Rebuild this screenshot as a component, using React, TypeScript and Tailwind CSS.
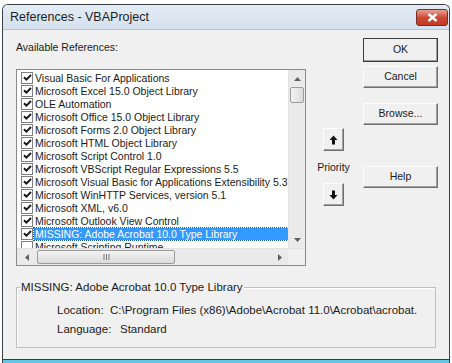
import React from 'react';

const refs = [
  { name: 'Visual Basic For Applications', checked: true },
  { name: 'Microsoft Excel 15.0 Object Library', checked: true },
  { name: 'OLE Automation', checked: true },
  { name: 'Microsoft Office 15.0 Object Library', checked: true },
  { name: 'Microsoft Forms 2.0 Object Library', checked: true },
  { name: 'Microsoft HTML Object Library', checked: true },
  { name: 'Microsoft Script Control 1.0', checked: true },
  { name: 'Microsoft VBScript Regular Expressions 5.5', checked: true },
  { name: 'Microsoft Visual Basic for Applications Extensibility 5.3', checked: true },
  { name: 'Microsoft WinHTTP Services, version 5.1', checked: true },
  { name: 'Microsoft XML, v6.0', checked: true },
  { name: 'Microsoft Outlook View Control', checked: true },
  { name: 'MISSING: Adobe Acrobat 10.0 Type Library', checked: true, selected: true },
  { name: 'Microsoft Scripting Runtime', checked: false },
];

function CheckBox({ checked }: { checked: boolean }) {
  return (
    <div className="w-[12px] h-[12px] shrink-0 border border-[#7e7f80] bg-white flex items-center justify-center">
      {checked && (
        <svg width="9" height="9" viewBox="0 0 9 9">
          <path d="M1 4.2 L3.4 6.6 L8 2" fill="none" stroke="#1a1a1a" strokeWidth="2" />
        </svg>
      )}
    </div>
  );
}

function Button({ label, isDefault = false, h = 'h-[22px]' }: { label: string; isDefault?: boolean; h?: string }) {
  return (
    <div
      className={`${h} w-[75px] flex items-center justify-center bg-[#f0f0f0] border ${
        isDefault ? 'border-[#3c3c3c]' : 'border-t-[#fdfdfd] border-l-[#fdfdfd] border-b-[#707070] border-r-[#707070]'
      } shadow-[inset_-1px_-1px_0_#a0a0a0]`}
    >
      <span className="text-[#1b1b1b]">{label}</span>
    </div>
  );
}

function ArrowBtn({ dir }: { dir: 'up' | 'down' }) {
  return (
    <div className="w-[21px] h-[23px] bg-[#f0f0f0] border border-t-[#fdfdfd] border-l-[#fdfdfd] border-b-[#707070] border-r-[#707070] shadow-[inset_-1px_-1px_0_#a0a0a0] flex items-center justify-center">
      <svg width="9" height="10" viewBox="0 0 9 10" className={dir === 'down' ? 'rotate-180' : ''}>
        <path d="M4.5 0.5 L8.5 5 L6 5 L6 9.5 L3 9.5 L3 5 L0.5 5 Z" fill="#111" />
      </svg>
    </div>
  );
}

export default function App() {
  return (
    <div
      className="w-[452px] h-[363px] bg-white overflow-hidden text-[10.5px] text-[#1b1b1b]"
      style={{ fontFamily: '"Liberation Sans", Arial, sans-serif' }}
    >
      <div className="ml-[2px] mt-[4px] w-[448px] h-[359px] flex flex-col border border-[#3a3f45] rounded-t-[6px] border-b-0 overflow-hidden">
        {/* title bar */}
        <div className="h-[24px] shrink-0 flex items-center justify-between bg-gradient-to-b from-[#e4edf6] to-[#d4e0ed] pl-[7px] pr-[1px]">
          <span className="text-[12.5px] text-[#1e1e1e] mt-[1px]">References - VBAProject</span>
          <div className="w-[32px] h-[17px] mt-[1px] rounded-[3px] border border-[#7a2b22] bg-gradient-to-b from-[#e9a194] via-[#cc4a36] to-[#c23a26] flex items-center justify-center">
            <svg width="11" height="9" viewBox="0 0 11 9">
              <path d="M1.5 1 L9.5 8 M9.5 1 L1.5 8" stroke="white" strokeWidth="2.4" />
            </svg>
          </div>
        </div>

        {/* body */}
        <div className="flex-1 bg-[#f0f0f0] border-t border-[#b9c5d2] border-b border-b-[#3a3f45] pl-[13px] pt-[8px] flex flex-col">
          <div className="flex">
            <div className="w-[290px]">
              <div className="mt-[2px] h-[14px] leading-[14px]">Available References:</div>
              <div className="mt-[15px] h-[197px] border border-[#8a8a8a] bg-white flex flex-col">
                <div className="flex flex-1 min-h-0">
                  <div className="flex-1 overflow-hidden pt-[1px] pl-[4px]">
                    {refs.map((r) => (
                      <div key={r.name} className="h-[13px] flex items-center gap-[1px] whitespace-nowrap">
                        <CheckBox checked={r.checked} />
                        <span
                          className={`leading-[12px] h-[12px] px-[1px] ${
                            r.selected ? 'bg-[#3399ff] text-white w-full outline outline-1 outline-dotted outline-[#1a5fa8]' : ''
                          }`}
                        >
                          {r.name}
                        </span>
                      </div>
                    ))}
                  </div>
                  {/* vertical scrollbar */}
                  <div className="w-[17px] shrink-0 bg-[#eaeaea] border-l border-[#e2e2e2] flex flex-col items-center">
                    <div className="h-[17px] flex items-center justify-center">
                      <svg width="7" height="4" viewBox="0 0 7 4"><path d="M0 4 L3.5 0 L7 4 Z" fill="#606060" /></svg>
                    </div>
                    <div className="w-[14px] h-[16px] rounded-[2px] border border-[#9c9c9c] bg-gradient-to-r from-[#f3f3f3] to-[#dcdcdc]" />
                    <div className="flex-1" />
                    <div className="h-[17px] flex items-center justify-center">
                      <svg width="7" height="4" viewBox="0 0 7 4"><path d="M0 0 L3.5 4 L7 0 Z" fill="#606060" /></svg>
                    </div>
                  </div>
                </div>
                {/* horizontal scrollbar */}
                <div className="h-[17px] shrink-0 flex bg-[#eaeaea] border-t border-[#e2e2e2]">
                  <div className="w-[20px] flex items-center justify-center">
                    <svg width="4" height="7" viewBox="0 0 4 7"><path d="M4 0 L0 3.5 L4 7 Z" fill="#606060" /></svg>
                  </div>
                  <div className="w-[138px] h-[14px] mt-[1px] rounded-[2px] border border-[#9c9c9c] bg-gradient-to-b from-[#f3f3f3] to-[#dcdcdc] flex items-center justify-center">
                    <svg width="7" height="6" viewBox="0 0 7 6"><path d="M1 0 V6 M3.5 0 V6 M6 0 V6" stroke="#777" strokeWidth="1" /></svg>
                  </div>
                  <div className="flex-1" />
                  <div className="w-[17px] flex items-center justify-center">
                    <svg width="4" height="7" viewBox="0 0 4 7"><path d="M0 0 L4 3.5 L0 7 Z" fill="#606060" /></svg>
                  </div>
                  <div className="w-[17px] bg-[#f0f0f0]" />
                </div>
              </div>
            </div>

            {/* priority column */}
            <div className="ml-[17px] w-[21px] pt-[90px] flex flex-col items-center">
              <ArrowBtn dir="up" />
              <div className="mt-[9px] mb-[9px] h-[14px] leading-[14px] whitespace-nowrap">Priority</div>
              <ArrowBtn dir="down" />
            </div>

            {/* buttons column */}
            <div className="ml-[19px] w-[75px] flex flex-col">
              <Button label="OK" isDefault h="h-[24px]" />
              <div className="mt-[4px]"><Button label="Cancel" /></div>
              <div className="mt-[15px]"><Button label="Browse..." /></div>
              <div className="mt-[41px]"><Button label="Help" /></div>
            </div>
          </div>

          {/* group box */}
          <div className="mt-[21px] w-[420px] h-[61px] border border-[#bfbfbf] shadow-[inset_1px_1px_0_#fff] relative text-[11.5px]">
            <span className="absolute left-[3px] -top-[8px] bg-[#f0f0f0] px-[1px] leading-[14px]">
              MISSING: Adobe Acrobat 10.0 Type Library
            </span>
            <div className="pl-[40px] pt-[15px] flex flex-col gap-[5px]">
              <div className="flex h-[14px] leading-[14px]">
                <span className="w-[53px]">Location:</span>
                <span className="whitespace-nowrap">C:\Program Files (x86)\Adobe\Acrobat 11.0\Acrobat\acrobat.</span>
              </div>
              <div className="flex h-[14px] leading-[14px]">
                <span className="w-[63px]">Language:</span>
                <span>Standard</span>
              </div>
            </div>
          </div>
        </div>
        <div className="h-[3px] shrink-0 bg-[#5fc8e6]" />
      </div>
    </div>
  );
}
